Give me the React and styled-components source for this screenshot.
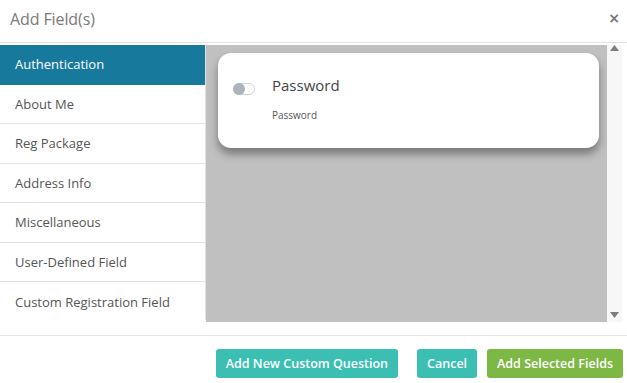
import React from "react";
import styled, { createGlobalStyle } from "styled-components";

const Global = createGlobalStyle`
  html, body { margin: 0; padding: 0; background: #fff; }
  body { font-family: "Open Sans", "Liberation Sans", sans-serif; }
  * { box-sizing: border-box; }
`;

const Modal = styled.div`
  width: 627px;
  height: 383px;
  display: flex;
  flex-direction: column;
  background: #fff;
`;

const Header = styled.div`
  height: 43px;
  display: flex;
  align-items: center;
  justify-content: space-between;
  padding: 0 7px 4px 10px;
  border-bottom: 1px solid #e3e3e3;
`;

const Title = styled.h1`
  margin: 0;
  font-size: 16px;
  font-weight: 400;
  color: #7a7a7a;
  letter-spacing: -0.1px;
`;

const Close = styled.button`
  border: 0;
  background: none;
  padding: 0;
  margin-top: -2px;
  font-size: 14px;
  font-weight: 700;
  color: #777;
  line-height: 1;
  font-family: "DejaVu Sans", sans-serif;
`;

const Body = styled.div`
  margin-top: 2px;
  height: 277px;
  display: flex;
  padding-right: 5px;
`;

const Sidebar = styled.ul`
  list-style: none;
  margin: 0;
  padding: 0;
  width: 206px;
  flex: none;
  border-right: 1px solid #e2e2e2;
  border-bottom: 1px solid #e2e2e2;
  border-bottom-right-radius: 4px;
`;

const Tab = styled.li`
  height: 39.5px;
  display: flex;
  align-items: center;
  padding: 0 0 0 15px;
  font-size: 13px;
  color: ${(p) => (p.$active ? "#fff" : "#555")};
  background: ${(p) => (p.$active ? "#17799c" : "#fff")};
  border-bottom: 1px solid ${(p) => (p.$active ? "#17799c" : "#e2e2e2")};
  &:last-child { border-bottom: 0; }
`;

const Panel = styled.div`
  flex: 1;
  background: #c0c0c0;
  padding: 8px 8px 0 12px;
`;

const Card = styled.div`
  height: 95px;
  background: #fff;
  border-radius: 13px;
  box-shadow: 0 6px 9px rgba(0, 0, 0, 0.38);
  display: flex;
  padding: 22px 0 0 15px;
`;

const Toggle = styled.span`
  width: 22px;
  height: 12px;
  margin-top: 8px;
  border: 1px solid #cfd3d8;
  border-radius: 6px;
  position: relative;
  flex: none;
  &::before {
    content: "";
    position: absolute;
    left: -1px;
    top: -1px;
    width: 12px;
    height: 12px;
    border-radius: 50%;
    background: #aeb4bb;
  }
`;

const CardText = styled.div`
  margin-left: 17px;
  display: flex;
  flex-direction: column;
`;

const CardTitle = styled.div`
  font-size: 15px;
  color: #444;
  line-height: 20px;
`;

const CardSub = styled.div`
  margin-top: 13px;
  font-size: 10px;
  color: #555;
`;

const Scrollbar = styled.div`
  width: 15px;
  background: #f7f7f7;
  display: flex;
  flex-direction: column;
  justify-content: space-between;
  align-items: center;
  padding: 0 0 3px;
`;

const Arrow = ({ down }) => (
  <svg width="9" height="7" viewBox="0 0 9 7">
    <path d={down ? "M0 0 L9 0 L4.5 6 Z" : "M4.5 0 L9 6 L0 6 Z"} fill="#7d7d7d" />
  </svg>
);

const Footer = styled.div`
  margin-top: 13px;
  border-top: 1px solid #e3e3e3;
  flex: 1;
  display: flex;
  justify-content: flex-end;
  align-items: flex-start;
  padding: 13px 4px 0 0;
  gap: 10px;
`;

const Button = styled.button`
  height: 29px;
  border: 0;
  border-radius: 3px;
  padding: 0 10px;
  font-family: "Open Sans", sans-serif;
  font-size: 12.5px;
  font-weight: 600;
  color: #fff;
  background: ${(p) => (p.$green ? "#7db844" : "#3bbfb3")};
  margin-left: ${(p) => p.$gapLeft || 0}px;
`;

const tabs = [
  "Authentication",
  "About Me",
  "Reg Package",
  "Address Info",
  "Miscellaneous",
  "User-Defined Field",
  "Custom Registration Field",
];

export default function App() {
  return (
    <Modal>
      <Global />
      <Header>
        <Title>Add Field(s)</Title>
        <Close>×</Close>
      </Header>
      <Body>
        <Sidebar>
          {tabs.map((t, i) => (
            <Tab key={t} $active={i === 0}>{t}</Tab>
          ))}
        </Sidebar>
        <Panel>
          <Card>
            <Toggle />
            <CardText>
              <CardTitle>Password</CardTitle>
              <CardSub>Password</CardSub>
            </CardText>
          </Card>
        </Panel>
        <Scrollbar>
          <Arrow />
          <Arrow down />
        </Scrollbar>
      </Body>
      <Footer>
        <Button>Add New Custom Question</Button>
        <Button $gapLeft={9}>Cancel</Button>
        <Button $green>Add Selected Fields</Button>
      </Footer>
    </Modal>
  );
}
